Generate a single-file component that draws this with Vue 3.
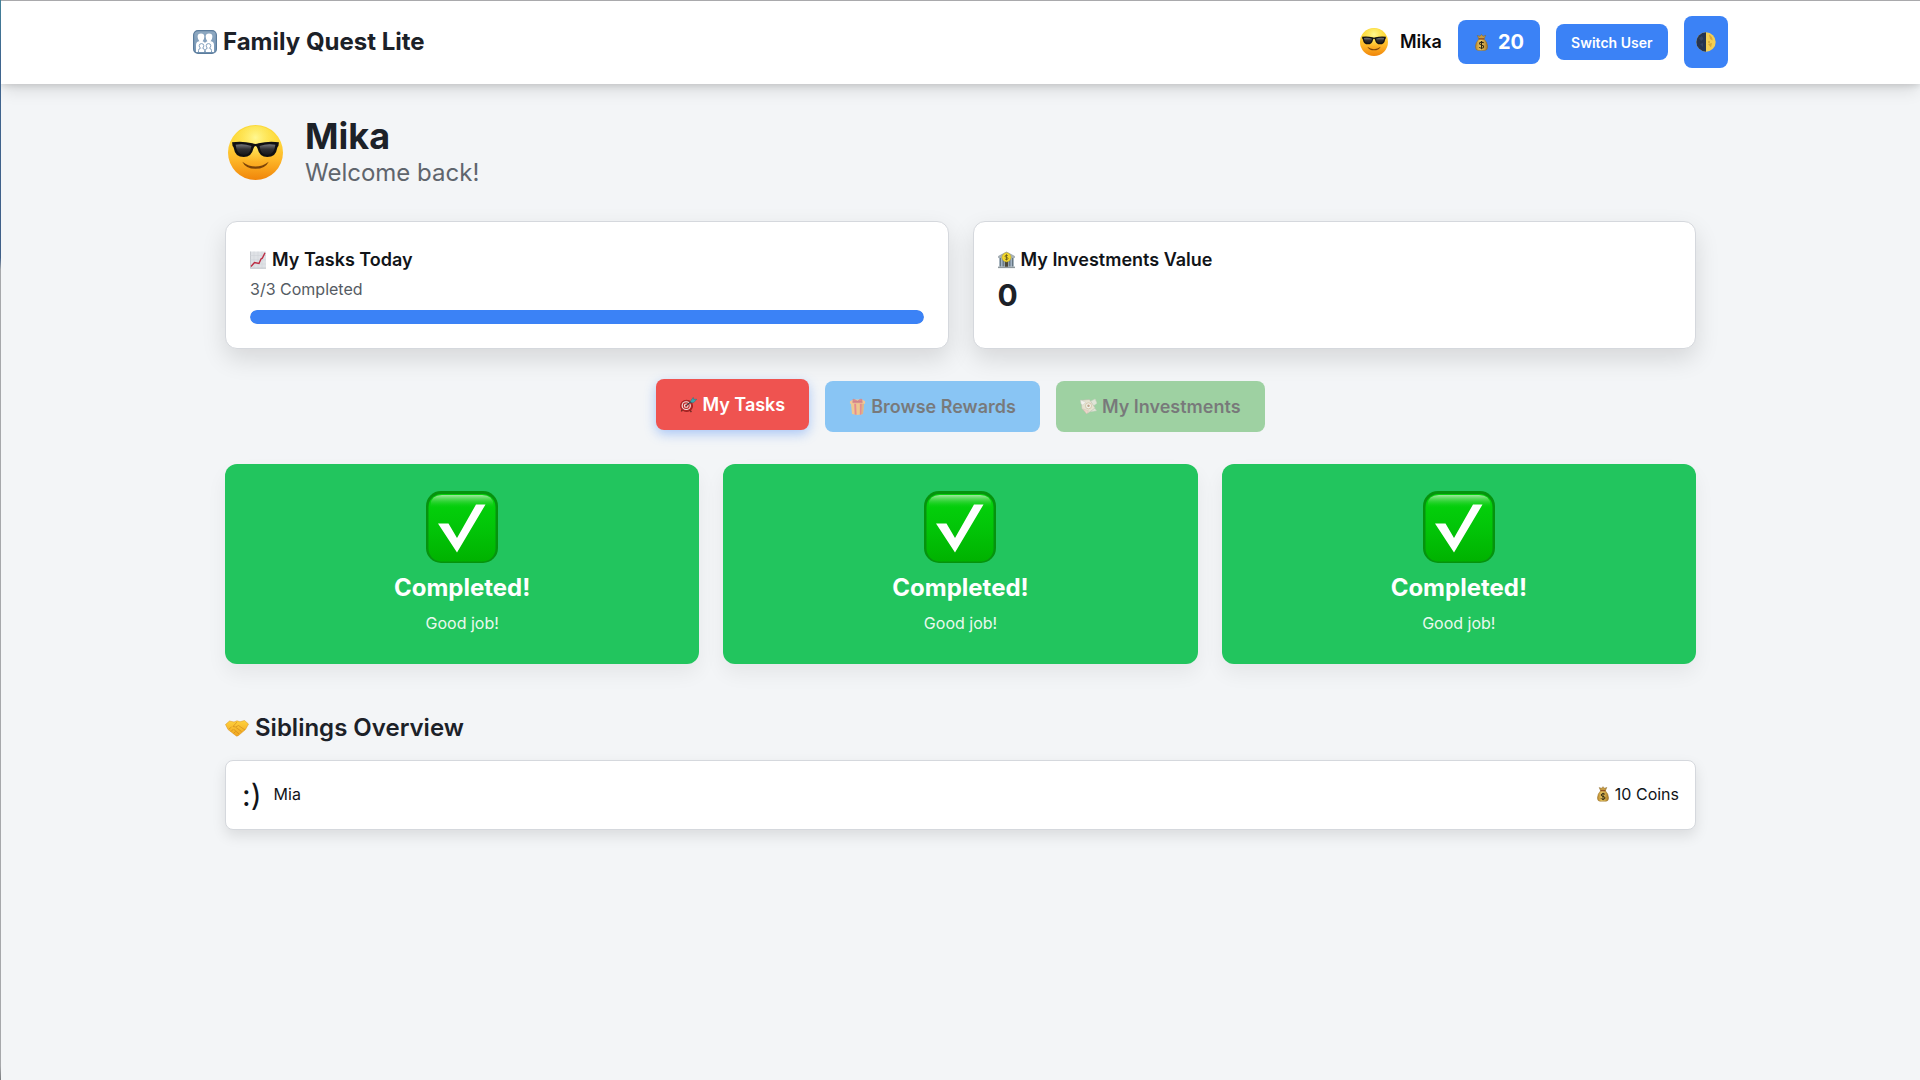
<script setup>
import { ref } from 'vue'

const user = ref({ name: 'Mika', coins: 20 })
const tasksDone = ref(3)
const tasksTotal = ref(3)
const investments = ref(0)
const activeTab = ref('tasks')

const tabs = [
  { id: 'tasks', label: 'My Tasks', icon: 'target' },
  { id: 'rewards', label: 'Browse Rewards', icon: 'gift' },
  { id: 'investments', label: 'My Investments', icon: 'money' }
]

const siblings = ref([{ name: 'Mia', avatar: ':)', coins: 10 }])
</script>

<template>
  <svg class="sprite" aria-hidden="true">
    <defs>
      <linearGradient id="face" x1="0" y1="0" x2="0" y2="1">
        <stop offset="0" stop-color="#fbd93a" />
        <stop offset="0.3" stop-color="#ffd83c" />
        <stop offset="0.65" stop-color="#fdb426" />
        <stop offset="1" stop-color="#f0850a" />
      </linearGradient>
      <radialGradient id="face-glow" cx="0.5" cy="0.22" r="0.45">
        <stop offset="0" stop-color="#fffb9c" stop-opacity="0.9" />
        <stop offset="1" stop-color="#fff05a" stop-opacity="0" />
      </radialGradient>
      <linearGradient id="lens" x1="0" y1="0" x2="0" y2="1">
        <stop offset="0" stop-color="#77777b" />
        <stop offset="0.45" stop-color="#303033" />
        <stop offset="1" stop-color="#18181a" />
      </linearGradient>
      <linearGradient id="check" x1="0" y1="0" x2="0" y2="1">
        <stop offset="0" stop-color="#04d40c" />
        <stop offset="0.5" stop-color="#02c508" />
        <stop offset="1" stop-color="#00b200" />
      </linearGradient>
      <linearGradient id="check-shine" x1="0" y1="0" x2="0" y2="1">
        <stop offset="0" stop-color="#a0e8a0" />
        <stop offset="1" stop-color="#0fcb16" stop-opacity="0" />
      </linearGradient>
      <linearGradient id="family-bg" x1="0" y1="0" x2="0" y2="1">
        <stop offset="0" stop-color="#8fa9c1" />
        <stop offset="1" stop-color="#7595b5" />
      </linearGradient>
      <linearGradient id="hands" x1="0" y1="0" x2="0" y2="1">
        <stop offset="0" stop-color="#ffd23d" />
        <stop offset="1" stop-color="#f0a41f" />
      </linearGradient>
      <linearGradient id="bag" x1="0" y1="0" x2="1" y2="0">
        <stop offset="0" stop-color="#b8862c" />
        <stop offset="0.45" stop-color="#f1cf68" />
        <stop offset="1" stop-color="#a87521" />
      </linearGradient>
      <clipPath id="moon-left"><path d="M0 0H10V20H0Z" /></clipPath>
    </defs>

    <symbol id="cool" viewBox="0 0 54 54">
      <circle cx="27" cy="27" r="27" fill="url(#face)" />
      <circle cx="27" cy="27" r="26" fill="url(#face-glow)" />
      <path d="M14 36Q27 45.500 40 36Q36.500 43 27 43Q17.500 43 14 36Z" fill="#7b4308" />
      <path d="M4 17Q14 15.500 24 18Q27 19.200 30 18Q40 15.500 50 17L49.500 20.500Q48.500 21 48.200 23Q47 31.500 38.500 31.500Q31 31.500 29 23Q28.500 20.500 27 20.500Q25.500 20.500 25 23Q23 31.500 15.500 31.500Q7 31.500 5.800 23Q5.500 21 4.500 20.500Z" fill="#101012" />
      <path d="M7.500 19.500Q15 18 23 20.500Q22 29.500 15.500 29.500Q8.500 29.500 7.500 19.500ZM46.500 19.500Q39 18 31 20.500Q32 29.500 38.500 29.500Q45.500 29.500 46.500 19.500Z" fill="url(#lens)" />
    </symbol>

    <symbol id="family" viewBox="0 0 24 24">
      <rect x="0.600" y="0.600" width="22.800" height="22.800" rx="4.500" fill="url(#family-bg)" stroke="#5b7c9c" stroke-width="1.200" />
      <path d="M3 22V15Q3 11.500 6.500 11.200Q4.600 9.500 4.600 6.800Q4.600 3.500 8 3.500Q11.300 3.500 11.300 6.800Q11.300 9.500 9.600 11.200Q11.500 11.600 12 13Q12.500 11.600 14.400 11.200Q12.700 9.500 12.700 6.800Q12.700 3.500 16 3.500Q19.400 3.500 19.400 6.800Q19.400 9.500 17.500 11.200Q21 11.500 21 15V22Z" fill="#fff" />
      <g fill="#fff" stroke="#7595b5" stroke-width="0.900">
        <path d="M5.500 22V20.500Q5.500 18.600 7.600 18.200Q6.200 17.200 6.200 15.700Q6.200 13.600 8.500 13.600Q10.800 13.600 10.800 15.700Q10.800 17.200 9.600 18.200Q11.600 18.600 11.600 20.500V22" />
        <path d="M12.400 22V20.500Q12.400 18.600 14.400 18.200Q13.200 17.200 13.200 15.700Q13.200 13.600 15.500 13.600Q17.800 13.600 17.800 15.700Q17.800 17.200 16.400 18.200Q18.500 18.600 18.500 20.500V22" />
      </g>
    </symbol>

    <symbol id="coinbag" viewBox="0 0 14 18">
      <path d="M4.200 5.200L2.500 1.500L5.300 2.300L7 0.400L8.700 2.300L11.500 1.300L9.800 5.200Z" fill="#c59a43" stroke="#7c5b20" stroke-width="0.500" />
      <path d="M4.400 5H9.600Q13.500 9 13.500 13.500Q13.500 17.500 10.500 17.500H3.500Q0.500 17.500 0.500 13.500Q0.500 9 4.400 5Z" fill="url(#bag)" stroke="#8b621b" stroke-width="0.500" />
      <path d="M4.200 5.200H9.800" stroke="#8a3f1c" stroke-width="1.200" />
      <path d="M9.300 9.600Q8.700 8.600 7 8.600Q4.900 8.600 4.900 10.200Q4.900 11.500 7 11.800Q9.300 12.100 9.300 13.600Q9.300 15.200 7 15.200Q5.200 15.200 4.600 14M7 7.500V16.300" fill="none" stroke="#2d2410" stroke-width="1.100" />
    </symbol>

    <symbol id="moon" viewBox="0 0 20 20">
      <circle cx="10" cy="10" r="9.700" fill="#f5cf52" />
      <path d="M13 2.500Q17 5 16.500 8.500L14 7ZM12 12L16 11L15 15.500Z" fill="#d9a93a" />
      <circle cx="13" cy="10" r="1" fill="#d6a738" />
      <circle cx="10" cy="10" r="9.700" fill="#26344f" clip-path="url(#moon-left)" />
      <path d="M3 6L6 4L7.500 7L5 9ZM4 12L7 11V15Z" fill="#354561" />
    </symbol>

    <symbol id="chart" viewBox="0 0 16 18">
      <path d="M0 0.500H16V17.500H0Z" fill="#dfe2e6" />
      <path d="M0.300 0.500V17.200H16" fill="none" stroke="#b1b6bc" stroke-width="0.700" />
      <path d="M0 4.500H16M0 8.800H16M0 13H16M4 0.500V17.500M8 0.500V17.500M12 0.500V17.500" stroke="#ccd1d6" stroke-width="0.500" />
      <path d="M1 15.500L4.500 11.500L9 12.500L11 8L12.300 7.200L15 1.800" fill="none" stroke="#bc2c43" stroke-width="1.400" />
    </symbol>

    <symbol id="bank" viewBox="0 0 18 18">
      <path d="M0.500 5L9 0.500L17.500 5V6.500H0.500Z" fill="#aab3b8" stroke="#79858d" stroke-width="0.500" />
      <path d="M1.500 6.500H16.500V16H1.500Z" fill="#a8bacb" />
      <path d="M2.500 7V16M5.500 7V16M12.500 7V16M15.500 7V16" stroke="#667681" stroke-width="1.500" />
      <path d="M7.200 10H10.800V16.500H7.200Z" fill="#4d4838" />
      <path d="M0 16H18V17.600H0Z" fill="#8f989d" />
      <circle cx="9" cy="6.200" r="4.800" fill="#f2d72d" stroke="#b8a127" stroke-width="0.500" />
      <path d="M10.600 4.800Q10.100 4 9 4Q7.500 4 7.500 5.100Q7.500 6 9 6.200Q10.600 6.500 10.600 7.400Q10.600 8.500 9 8.500Q7.800 8.500 7.300 7.700M9 3V9.400" fill="none" stroke="#66591b" stroke-width="0.900" />
    </symbol>

    <symbol id="target" viewBox="0 0 18 18">
      <path d="M3 13L1.500 16.500M10 14L12 17" stroke="#6b2d23" stroke-width="1.500" />
      <ellipse cx="7" cy="10.500" rx="6.800" ry="6.500" fill="#972222" />
      <ellipse cx="6.600" cy="10.200" rx="6.200" ry="5.900" fill="#b52626" />
      <ellipse cx="6.600" cy="10.200" rx="4.900" ry="4.600" fill="#f4e8e4" />
      <ellipse cx="6.600" cy="10.200" rx="3.700" ry="3.500" fill="#bd2727" />
      <ellipse cx="6.600" cy="10.200" rx="2.500" ry="2.300" fill="#f4e8e4" />
      <circle cx="6.600" cy="10.200" r="1.300" fill="#bd2727" />
      <path d="M6.600 10.200L13 5" stroke="#34393e" stroke-width="1.100" />
      <path d="M11 5.500L14 1.500L14.500 3.500L17.800 3.500L14.500 7H11.500Z" fill="#3aa5ad" stroke="#28727b" stroke-width="0.500" />
    </symbol>

    <symbol id="gift" viewBox="0 0 18 18">
      <path d="M2 5H16L14.800 17L9 18L3.200 17Z" fill="#e89a2c" />
      <path d="M12 5H16L14.800 17L12 17.500Z" fill="#c8751e" />
      <path d="M5.500 5H7.500L8 17.800L6 17.500ZM11.500 5H13.500L13 17.500L11.500 17.700Z" fill="#d9232d" />
      <path d="M1 3.500L5 1.500H14L17 3.500V6H1Z" fill="#ef9a3a" />
      <path d="M9 3.500Q4 4.500 4 2Q4 0 9 3.500Q13 -0.200 14 2Q14 4.500 9 3.500ZM4 3.500H14V5H4Z" fill="#dd202c" stroke="#94121b" stroke-width="0.500" />
    </symbol>

    <symbol id="money" viewBox="0 0 18 17">
      <path d="M9 4L16 0.500L18 5L14 8L17.500 13L11 14Z" fill="#cfd6b8" stroke="#9eac8c" stroke-width="0.500" />
      <path d="M1 2L10 1L16 10L8 16L2 11Z" fill="#d9d2ac" stroke="#7e8868" stroke-width="0.600" />
      <path d="M0.500 1.500L6 4L3 7L1 5.500Z" fill="#f4f2e4" stroke="#98988a" stroke-width="0.400" />
      <path d="M3 11L7 16.500L9 13Z" fill="#e8b49a" stroke="#a8806a" stroke-width="0.400" />
      <circle cx="9" cy="7.800" r="3.200" fill="#eef0db" stroke="#a27a3b" stroke-width="0.700" />
      <circle cx="9" cy="7.800" r="1.300" fill="#8b5320" />
    </symbol>

    <symbol id="done" viewBox="0 0 72 72">
      <rect width="72" height="72" rx="15" fill="#06930e" />
      <rect x="2.500" y="3" width="67" height="67.500" rx="13" fill="url(#check)" />
      <path d="M4.500 17V14Q5 4 16 4H56Q67 4 67.500 14V17Z" fill="url(#check-shine)" />
      <path d="M12 32.500H22.500L31 47L50 13.500H59.500L31 61.500Z" fill="#fff" />
    </symbol>

    <symbol id="handshake" viewBox="0 0 24 18">
      <path d="M0.500 5.500L4.500 2L9 3L12 1.800L15 2.800L19.500 1.500L23.500 5L20.500 10.500L13.500 16.500Q11.500 18 10 16L3 10.500Z" fill="url(#hands)" stroke="#d69021" stroke-width="0.500" />
      <path d="M12 3L8 7.500Q10.500 9 13.500 6.500L20 11M11 8.500L16.500 12.500M9 10.500L14 15M4 10L6.500 8M6 12.500L8.500 10M8.500 14.500L10.500 12.500" fill="none" stroke="#c9851a" stroke-width="0.600" />
    </symbol>
  </svg>

  <div class="app">
    <header class="header">
      <div class="header-inner">
        <h1 class="brand">
          <svg class="brand-icon"><use href="#family" /></svg>
          <span>Family Quest Lite</span>
        </h1>
        <div class="header-actions">
          <div class="current-user">
            <svg class="user-icon"><use href="#cool" /></svg>
            <span>{{ user.name }}</span>
          </div>
          <div class="coins">
            <svg class="bag-icon"><use href="#coinbag" /></svg>
            <span>{{ user.coins }}</span>
          </div>
          <button class="switch-btn">Switch User</button>
          <button class="theme-btn" aria-label="Theme">
            <svg class="moon-icon"><use href="#moon" /></svg>
          </button>
        </div>
      </div>
    </header>

    <main class="main">
      <section class="hero">
        <svg class="hero-icon"><use href="#cool" /></svg>
        <div>
          <h2>{{ user.name }}</h2>
          <p>Welcome back!</p>
        </div>
      </section>

      <section class="stats">
        <div class="stat-card">
          <h3><svg class="chart-icon"><use href="#chart" /></svg>My Tasks Today</h3>
          <p class="stat-text">{{ tasksDone }}/{{ tasksTotal }} Completed</p>
          <div class="progress">
            <div class="progress-bar" :style="{ width: (tasksDone / tasksTotal) * 100 + '%' }"></div>
          </div>
        </div>
        <div class="stat-card">
          <h3><svg class="bank-icon"><use href="#bank" /></svg>My Investments Value</h3>
          <p class="stat-value">{{ investments }}</p>
        </div>
      </section>

      <nav class="tabs">
        <button
          v-for="tab in tabs"
          :key="tab.id"
          class="tab"
          :class="[tab.id, { active: activeTab === tab.id }]"
          @click="activeTab = tab.id"
        >
          <svg class="tab-icon"><use :href="'#' + tab.icon" /></svg>
          <span>{{ tab.label }}</span>
        </button>
      </nav>

      <section class="tasks-grid">
        <div v-for="n in tasksTotal" :key="n" class="task-card">
          <svg class="done-icon"><use href="#done" /></svg>
          <h3>Completed!</h3>
          <p>Good job!</p>
        </div>
      </section>

      <section class="siblings">
        <h2><svg class="hands-icon"><use href="#handshake" /></svg>Siblings Overview</h2>
        <div v-for="s in siblings" :key="s.name" class="sibling">
          <span class="sibling-avatar">{{ s.avatar }}</span>
          <span class="sibling-name">{{ s.name }}</span>
          <svg class="bag-icon"><use href="#coinbag" /></svg>
          <span class="sibling-coins">{{ s.coins }} Coins</span>
        </div>
      </section>
    </main>
  </div>
</template>

<style>
body {
  margin: 0;
  background: #f3f4f6;
}
</style>

<style scoped>
* {
  box-sizing: border-box;
}

h1, h2, h3, p {
  margin: 0;
}

svg {
  display: block;
  flex-shrink: 0;
}

button {
  font-family: inherit;
  border: none;
  cursor: pointer;
}

.sprite {
  position: absolute;
  width: 0;
  height: 0;
}

.app {
  height: 1080px;
  overflow: hidden;
  border-left: 1px solid;
  border-image: linear-gradient(#43839a 0, #3f658f 60px, #3f5f88 258px, #a6a8ab 270px, #a6a8ab 1065px, #77797c 100%) 1;
  background: #f3f5f7;
  color: #1c2128;
  font-family: Inter, "Liberation Sans", sans-serif;
  font-size: 16px;
  line-height: 24px;
}

.header {
  height: 84px;
  border-top: 1px solid #a9a9ac;
  background: #fff;
  box-shadow: 0 10px 15px -3px rgba(0, 0, 0, 0.1), 0 2px 6px rgba(0, 0, 0, 0.12);
}

.header-inner {
  display: flex;
  align-items: center;
  justify-content: space-between;
  width: 1535px;
  height: 82px;
  margin: 0 auto;
}

.brand {
  display: flex;
  align-items: center;
  gap: 6px;
  font-size: 24px;
  font-weight: 700;
  line-height: 32px;
}

.brand-icon {
  width: 24px;
  height: 24px;
}

.header-actions {
  display: flex;
  align-items: center;
  gap: 16px;
}

.current-user {
  display: flex;
  align-items: center;
  gap: 12px;
  color: #0b0b0d;
  font-size: 18px;
  font-weight: 600;
}

.user-icon {
  width: 28px;
  height: 28px;
}

.coins {
  display: flex;
  align-items: center;
  gap: 10px;
  height: 44px;
  padding: 0 15.6px 0 17px;
  border-radius: 8px;
  background: #3b82f6;
  color: #fff;
  font-size: 20px;
  font-weight: 700;
}

.bag-icon {
  width: 13px;
  height: 17px;
}

.switch-btn {
  height: 36px;
  padding: 0 15.5px;
  border-radius: 8px;
  background: #3b82f6;
  color: #fff;
  font-size: 14px;
  font-weight: 600;
}

.theme-btn {
  display: flex;
  align-items: center;
  justify-content: center;
  width: 44px;
  height: 52px;
  padding: 0;
  border-radius: 8px;
  background: #3b82f6;
}

.moon-icon {
  width: 20px;
  height: 20px;
}

.main {
  width: 1471px;
  margin: 0 auto;
  padding-top: 32px;
}

.hero {
  display: flex;
  align-items: center;
  gap: 22px;
  height: 72px;
  margin-bottom: 33px;
  padding-left: 3px;
}

.hero-icon {
  width: 55px;
  height: 55px;
}

.hero h2 {
  font-size: 36px;
  font-weight: 700;
  line-height: 41px;
}

.hero p {
  color: #5f656d;
  font-size: 24px;
  line-height: 32px;
}

.stats {
  display: grid;
  grid-template-columns: 1fr 1fr;
  gap: 24px;
  margin-bottom: 32px;
}

.stat-card {
  height: 127.5px;
  padding: 24px;
  border: 1px solid #d5d8dd;
  border-radius: 12px;
  background: #fff;
  box-shadow: 0 10px 25px rgba(0, 0, 0, 0.12);
}

.stat-card h3 {
  display: flex;
  align-items: center;
  gap: 6px;
  color: #111418;
  font-size: 18px;
  font-weight: 600;
  line-height: 28px;
}

.chart-icon {
  width: 16px;
  height: 18px;
}

.bank-icon {
  width: 17px;
  height: 18px;
}

.stat-text {
  margin-top: 3px;
  color: #555b63;
}

.progress {
  height: 14px;
  margin-top: 8.5px;
  overflow: hidden;
  border-radius: 7px;
  background: #e5e7eb;
}

.progress-bar {
  height: 100%;
  border-radius: 7px;
  background: #3b82f6;
}

.stat-value {
  margin-top: 3px;
  font-size: 30px;
  font-weight: 700;
  line-height: 36px;
}

.tabs {
  display: flex;
  justify-content: center;
  gap: 16px;
  margin-bottom: 32px;
}

.tab {
  display: flex;
  align-items: center;
  gap: 5px;
  height: 51px;
  padding: 0 24px;
  border-radius: 8px;
  color: #000;
  font-size: 18px;
  font-weight: 600;
  opacity: 0.5;
}

.tab-icon {
  width: 17px;
  height: 17px;
}

.tab.tasks {
  background: #ef5350;
}

.tab.rewards {
  background: #2196f3;
}

.tab.investments {
  background: #4caf50;
}

.tab.active {
  color: #fff;
  opacity: 1;
  transform: translateY(-2px);
  box-shadow: 0 4px 12px rgba(59, 130, 246, 0.4);
}

.tasks-grid {
  display: grid;
  grid-template-columns: repeat(3, 1fr);
  gap: 24px;
  margin-bottom: 48px;
}

.task-card {
  display: flex;
  flex-direction: column;
  align-items: center;
  height: 200px;
  padding-top: 27px;
  border-radius: 12px;
  background: #22c55e;
  box-shadow: 0 10px 20px rgba(0, 0, 0, 0.06);
  color: #fff;
}

.done-icon {
  width: 72px;
  height: 72px;
}

.task-card h3 {
  margin-top: 9px;
  font-size: 24px;
  font-weight: 700;
  line-height: 32px;
}

.task-card p {
  margin-top: 7px;
  opacity: 0.9;
}

.siblings h2 {
  display: flex;
  align-items: center;
  gap: 6px;
  margin-bottom: 16px;
  font-size: 24px;
  font-weight: 600;
  line-height: 32px;
}

.hands-icon {
  width: 24px;
  height: 18px;
}

.sibling {
  display: flex;
  align-items: center;
  height: 70px;
  padding: 0 16px;
  border: 1px solid #d5d8dd;
  border-radius: 8px;
  background: #fff;
  box-shadow: 0 6px 14px rgba(0, 0, 0, 0.1);
  color: #111418;
}

.sibling-avatar {
  font-size: 30px;
  line-height: 36px;
}

.sibling-name {
  margin: 0 auto 0 12px;
  padding-bottom: 2px;
}

.sibling-coins {
  padding-bottom: 2px;
}

.sibling .bag-icon {
  width: 12px;
  height: 16px;
  margin: 0 6px 2px 0;
}
</style>
